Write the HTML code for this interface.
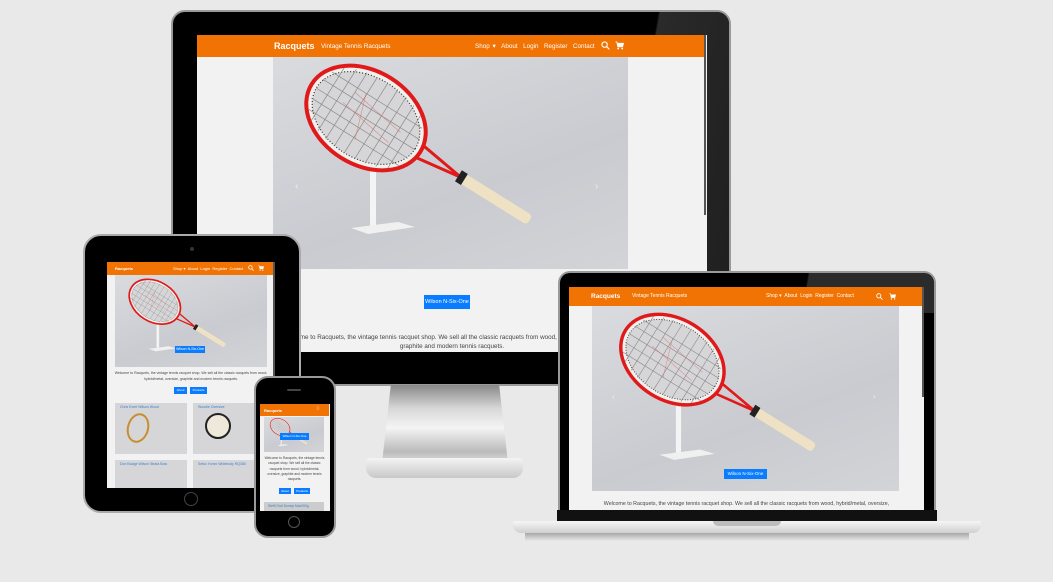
<!DOCTYPE html>
<html><head><meta charset="utf-8">
<style>
*{margin:0;padding:0;box-sizing:border-box}
body{width:1053px;height:582px;background:#e9e9e9;position:relative;overflow:hidden;font-family:"Liberation Sans",sans-serif}
.a{position:absolute}
.nav{position:absolute;background:#f07304;color:#fff;white-space:nowrap}
.btn{position:absolute;background:#0a7cff;color:#fff;text-align:center;white-space:nowrap}
.img{position:absolute;background:linear-gradient(160deg,#d9dbdf,#c9cbd0 60%,#d2d4d8);overflow:hidden}
.img svg{width:100%;height:100%;display:block}
.txt{position:absolute;color:#444;text-align:center}
</style></head><body>
<svg width="0" height="0" style="position:absolute">
<defs>
<symbol id="rk" viewBox="0 0 355 212">
<rect x="97" y="112" width="6" height="60" fill="#f4f4f4"/>
<polygon points="78,171 125,165 142,170 95,177" fill="#f0f0f0"/>
<g transform="rotate(32 93 61)">
<ellipse cx="93" cy="61" rx="64" ry="47" fill="#f2f0ec" stroke="#e01a1a" stroke-width="4"/>
<ellipse cx="93" cy="61" rx="58" ry="41" fill="#d6d6d8" stroke="#333" stroke-width="1.2" stroke-dasharray="1 2"/>
<g stroke="#8a8a8a" stroke-width="0.7">
<line x1="48" y1="30" x2="48" y2="92"/><line x1="59" y1="25" x2="59" y2="97"/><line x1="70" y1="22" x2="70" y2="100"/><line x1="81" y1="21" x2="81" y2="101"/><line x1="93" y1="20" x2="93" y2="102"/><line x1="105" y1="21" x2="105" y2="101"/><line x1="116" y1="22" x2="116" y2="100"/><line x1="127" y1="25" x2="127" y2="97"/><line x1="138" y1="30" x2="138" y2="92"/>
<line x1="40" y1="40" x2="146" y2="40"/><line x1="36" y1="51" x2="150" y2="51"/><line x1="35" y1="62" x2="151" y2="62"/><line x1="36" y1="73" x2="150" y2="73"/><line x1="40" y1="84" x2="146" y2="84"/>
</g>
<g stroke="#d66" stroke-width="0.6" opacity="0.7"><line x1="70" y1="45" x2="130" y2="55"/><line x1="65" y1="60" x2="125" y2="70"/><line x1="80" y1="40" x2="95" y2="85"/></g>
<path d="M156,54 L205,61 M156,68 L205,61" stroke="#e01a1a" stroke-width="3" fill="none"/>
<rect x="204" y="55.5" width="82" height="11" rx="4" fill="#efe2c4"/>
<rect x="202" y="54.5" width="7" height="13" fill="#222"/>
</g>
</symbol>
<symbol id="srch" viewBox="0 0 10 10"><circle cx="4" cy="4" r="3" fill="none" stroke="#fff" stroke-width="1.2"/><line x1="6.2" y1="6.2" x2="9.3" y2="9.3" stroke="#fff" stroke-width="1.3"/></symbol>
<symbol id="cart" viewBox="0 0 10 10"><path d="M0.5,1 H2 L3,6.5 H8.5 L9.5,2.5 H2.5" fill="#fff" stroke="#fff" stroke-width="0.8"/><circle cx="3.5" cy="8.5" r="1" fill="#fff"/><circle cx="8" cy="8.5" r="1" fill="#fff"/></symbol>
</defs></svg>

<!-- MONITOR -->
<div class="a" style="left:171px;top:10px;width:560px;height:376px;background:#000;border-radius:14px;border:2px solid #9a9a9a"></div>
<div class="a" style="left:600px;top:12px;width:129px;height:372px;background:linear-gradient(100deg,transparent 30%,#2a2a2a 31%,#1e1e1e);border-radius:0 12px 12px 0"></div>
<div class="a" style="left:197px;top:35px;width:510px;height:317px;background:#f2f2f2;overflow:hidden">
  <div class="nav" style="left:0;top:0;width:508px;height:22px;font-size:6.3px">
    <span class="a" style="left:77px;top:6px;font-size:9px;font-weight:bold">Racquets</span>
    <span class="a" style="left:124px;top:8px">Vintage Tennis Racquets</span>
    <span class="a" style="left:278px;top:8px;word-spacing:1px">Shop ▾ &nbsp;About &nbsp;Login &nbsp;Register &nbsp;Contact</span>
    <svg class="a" style="left:404px;top:6px" width="9" height="9"><use href="#srch"/></svg>
    <svg class="a" style="left:418px;top:6px" width="9" height="9"><use href="#cart"/></svg>
  </div>
  <div class="a" style="left:507px;top:0;width:2px;height:180px;background:#555"></div>
  <div class="img" style="left:76px;top:22px;width:355px;height:212px"><svg><use href="#rk"/></svg>
    <span class="a" style="left:22px;top:124px;color:#eee;font-size:10px">‹</span><span class="a" style="left:322px;top:124px;color:#eee;font-size:10px">›</span></div>
  <div class="btn" style="left:227px;top:260px;width:46px;height:14px;font-size:5.5px;line-height:14px">Wilson N-Six-One</div>
  <div class="txt" style="left:-40px;top:298px;width:590px;font-size:6.3px;line-height:9px">Welcome to Racquets, the vintage tennis racquet shop. We sell all the classic racquets from wood, hybrid/metal, oversize,<br>graphite and modern tennis racquets.</div>
</div>
<!-- stand -->
<div class="a" style="left:382px;top:385px;width:126px;height:78px;background:linear-gradient(180deg,#888 0%,#d8d8d8 30%,#f4f4f4 55%,#bbb 85%,#ddd);clip-path:polygon(7% 0,93% 0,100% 100%,0 100%)"></div>
<div class="a" style="left:366px;top:458px;width:157px;height:20px;background:linear-gradient(180deg,#f4f4f4,#c8c8c8);border-radius:4px 4px 10px 10px"></div>

<!-- TABLET -->
<div class="a" style="left:83px;top:234px;width:218px;height:279px;background:#000;border-radius:18px;border:2px solid #aaa"></div>
<div class="a" style="left:190px;top:247px;width:4px;height:4px;border-radius:50%;background:#333"></div>
<div class="a" style="left:184px;top:492px;width:14px;height:14px;border-radius:50%;border:1.5px solid #444"></div>
<div class="a" style="left:107px;top:262px;width:168px;height:226px;background:#f2f2f2;overflow:hidden">
  <div class="nav" style="left:0;top:0;width:166px;height:13px;font-size:4px">
    <span class="a" style="left:8px;top:4px;font-weight:bold">Racquets</span>
    <span class="a" style="left:66px;top:4px">Shop ▾ &nbsp;About &nbsp;Login &nbsp;Register &nbsp;Contact</span>
    <svg class="a" style="left:141px;top:3px" width="6" height="6"><use href="#srch"/></svg>
    <svg class="a" style="left:151px;top:3px" width="6" height="6"><use href="#cart"/></svg>
  </div>
  <div class="a" style="left:166px;top:0;width:2px;height:226px;background:#555"></div>
  <div class="img" style="left:8px;top:13px;width:152px;height:92px"><svg><use href="#rk"/></svg></div>
  <div class="btn" style="left:68px;top:84px;width:30px;height:7px;font-size:3.5px;line-height:7px">Wilson N-Six-One</div>
  <div class="txt" style="left:6px;top:108px;width:156px;font-size:3.5px;line-height:6px">Welcome to Racquets, the vintage tennis racquet shop. We sell all the classic racquets from wood, hybrid/metal, oversize, graphite and modern tennis racquets.</div>
  <div class="btn" style="left:67px;top:125px;width:13px;height:7px;font-size:3px;line-height:7px">About</div>
  <div class="btn" style="left:83px;top:125px;width:17px;height:7px;font-size:3px;line-height:7px">Products</div>
  <div class="img" style="left:8px;top:141px;width:72px;height:51px;background:#d6d6d8"><span class="a" style="left:5px;top:2px;font-size:3.5px;color:#3b7fd1">Chris Evert Wilson Wood</span>
    <div class="a" style="left:12px;top:10px;width:22px;height:30px;border:2px solid #c78d2e;border-radius:50%;transform:rotate(15deg)"></div></div>
  <div class="img" style="left:86px;top:141px;width:80px;height:51px;background:#d6d6d8"><span class="a" style="left:5px;top:2px;font-size:3.5px;color:#3b7fd1">Woodie Oversize</span>
    <div class="a" style="left:12px;top:10px;width:26px;height:26px;border:2px solid #222;border-radius:50%;background:#eee9da"></div></div>
  <div class="img" style="left:8px;top:198px;width:72px;height:40px;background:#d6d6d8"><span class="a" style="left:5px;top:2px;font-size:3.5px;color:#3b7fd1">Don Budge Wilson Strata Bow</span></div>
  <div class="img" style="left:86px;top:198px;width:80px;height:40px;background:#d6d6d8"><span class="a" style="left:5px;top:2px;font-size:3.5px;color:#3b7fd1">Seiko Yonex Widebody RQ380</span></div>
</div>

<!-- PHONE -->
<div class="a" style="left:254px;top:376px;width:82px;height:162px;background:#000;border-radius:14px;border:2px solid #999"></div>
<div class="a" style="left:287px;top:389px;width:14px;height:2px;background:#444;border-radius:1px"></div>
<div class="a" style="left:288px;top:516px;width:12px;height:12px;border-radius:50%;border:1.5px solid #555"></div>
<div class="a" style="left:260px;top:404px;width:70px;height:107px;background:#f2f2f2;overflow:hidden">
  <div class="nav" style="left:0;top:0;width:69px;height:12px;font-size:4px"><span class="a" style="left:4px;top:4px;font-weight:bold">Racquets</span><span class="a" style="left:56px;top:2px;font-size:6px;color:#f9b070">≡</span></div>
  <div class="img" style="left:4px;top:13px;width:60px;height:35px"><svg><use href="#rk"/></svg></div>
  <div class="btn" style="left:20px;top:29px;width:29px;height:7px;font-size:3px;line-height:7px">Wilson N-Six-One</div>
  <div class="txt" style="left:3px;top:52px;width:63px;font-size:3.3px;line-height:5.3px">Welcome to Racquets, the vintage tennis racquet shop. We sell all the classic racquets from wood, hybrid/metal, oversize, graphite and modern tennis racquets.</div>
  <div class="btn" style="left:19px;top:84px;width:12px;height:6px;font-size:3px;line-height:6px">About</div>
  <div class="btn" style="left:34px;top:84px;width:16px;height:6px;font-size:3px;line-height:6px">Products</div>
  <div class="a" style="left:4px;top:98px;width:60px;height:9px;background:#ccc;font-size:3.3px;color:#3b7fd1;padding:2px 4px">Steffi Graf Dunlop Max200g</div>
</div>

<!-- LAPTOP -->
<div class="a" style="left:558px;top:271px;width:378px;height:251px;background:#000;border-radius:12px 12px 0 0;border:2px solid #999;border-bottom:none"></div>
<div class="a" style="left:790px;top:273px;width:144px;height:40px;background:linear-gradient(100deg,transparent 12%,#2b2b2b 13%);border-radius:0 10px 0 0"></div>
<div class="a" style="left:569px;top:287px;width:355px;height:223px;background:#f2f2f2;overflow:hidden">
  <div class="nav" style="left:0;top:0;width:353px;height:19px;font-size:5px">
    <span class="a" style="left:22px;top:6px;font-size:6.5px;font-weight:bold">Racquets</span>
    <span class="a" style="left:63px;top:6px">Vintage Tennis Racquets</span>
    <span class="a" style="left:197px;top:6px">Shop ▾ &nbsp;About &nbsp;Login &nbsp;Register &nbsp;Contact</span>
    <svg class="a" style="left:307px;top:6px" width="7" height="7"><use href="#srch"/></svg>
    <svg class="a" style="left:320px;top:6px" width="7" height="7"><use href="#cart"/></svg>
  </div>
  <div class="a" style="left:353px;top:0;width:2px;height:110px;background:#555"></div>
  <div class="img" style="left:23px;top:19px;width:307px;height:185px"><svg><use href="#rk"/></svg>
    <span class="a" style="left:20px;top:86px;color:#eee;font-size:8px">‹</span><span class="a" style="left:281px;top:86px;color:#eee;font-size:8px">›</span></div>
  <div class="btn" style="left:155px;top:182px;width:43px;height:10px;font-size:4.5px;line-height:10px">Wilson N-Six-One</div>
  <div class="txt" style="left:0;top:214px;width:355px;font-size:5.3px">Welcome to Racquets, the vintage tennis racquet shop. We sell all the classic racquets from wood, hybrid/metal, oversize,</div>
</div>
<div class="a" style="left:557px;top:510px;width:380px;height:11px;background:#111"></div>
<div class="a" style="left:513px;top:521px;width:468px;height:12px;background:linear-gradient(180deg,#f6f6f6,#cfcfcf);border-radius:2px 2px 8px 8px"></div>
<div class="a" style="left:713px;top:521px;width:68px;height:5px;background:#bdbdbd;border-radius:0 0 5px 5px"></div>
<div class="a" style="left:525px;top:533px;width:444px;height:8px;background:linear-gradient(180deg,#a8a8a8,#e9e9e9)"></div>
</body></html>
